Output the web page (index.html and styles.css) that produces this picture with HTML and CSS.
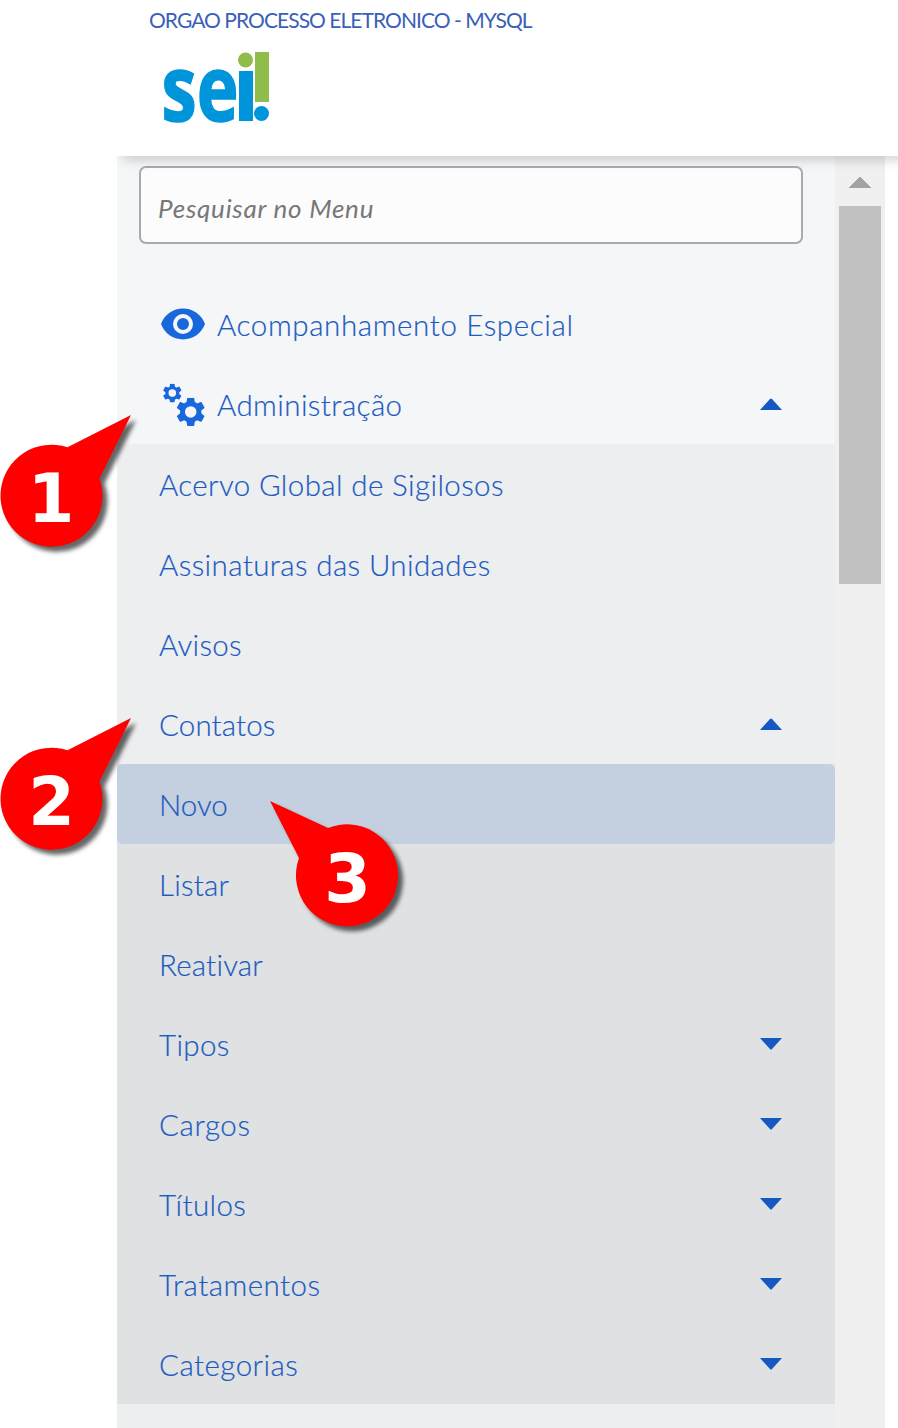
FILE: index.html
```html
<!DOCTYPE html>
<html lang="pt-BR">
<head>
<meta charset="utf-8">
<title>SEI - Menu</title>
<link rel="stylesheet" href="styles.css">
</head>
<body>
<svg class="defs" width="0" height="0" aria-hidden="true">
  <symbol id="gear" viewBox="2.4 2.4 19.2 19.2"><path d="M19.14 12.94c.04-.3.06-.61.06-.94 0-.32-.02-.64-.07-.94l2.03-1.58c.18-.14.23-.41.12-.61l-1.92-3.32c-.12-.22-.37-.29-.59-.22l-2.39.96c-.5-.38-1.03-.7-1.62-.94l-.36-2.54c-.04-.24-.24-.41-.48-.41h-3.84c-.24 0-.43.17-.47.41l-.36 2.54c-.59.24-1.13.57-1.62.94l-2.39-.96c-.22-.08-.47 0-.59.22L2.74 8.87c-.12.21-.08.47.12.61l2.03 1.58c-.05.3-.09.63-.09.94s.02.64.07.94l-2.03 1.58c-.18.14-.23.41-.12.61l1.92 3.32c.12.22.37.29.59.22l2.39-.96c.5.38 1.03.7 1.62.94l.36 2.54c.05.24.24.41.48.41h3.84c.24 0 .44-.17.47-.41l.36-2.54c.59-.24 1.13-.56 1.62-.94l2.39.96c.22.08.47 0 .59-.22l1.92-3.32c.12-.22.07-.47-.12-.61l-2.01-1.58zM12 15.9A3.9 3.9 0 1 1 12 8.1a3.9 3.9 0 0 1 0 7.8z"/></symbol>
  <symbol id="caret" viewBox="0 0 22 12"><path d="M0 0h22L12 11q-1 1-2 0z"/></symbol>
</svg>
<header class="top">
  <div class="org"><span>ORGAO PROCESSO ELETRONICO - MYSQL</span></div>
  <svg class="logo" width="108" height="76" viewBox="162 50 108 76" role="img" aria-label="sei!">
    <text class="logo-text" x="161.500" y="121" textLength="77" lengthAdjust="spacingAndGlyphs">se</text>
    <path class="blue" d="M239 71h14v50h-14z"/><circle class="blue" cx="261.5" cy="113.5" r="7.5"/>
    <path class="green" d="M255 52h14v50h-14z"/><circle class="green" cx="245.5" cy="60" r="7.5"/>
  </svg>
</header>
<main class="body">
  <div class="shade"></div>
  <nav class="side">
    <div class="search"><span class="t-search">Pesquisar no Menu</span></div>
    <a class="row"><svg class="ico" width="48" height="48" viewBox="0 0 24 24"><path fill-rule="evenodd" d="M12 4.3C7 4.3 2.73 7.4 1 12c1.73 4.6 6 7.7 11 7.7s9.27-3.1 11-7.7c-1.73-4.6-6-7.7-11-7.7zM12 17a5 5 0 1 1 0-10 5 5 0 0 1 0 10zm0-8a3 3 0 1 0 0 6 3 3 0 0 0 0-6z"/></svg><span class="t-acomp">Acompanhamento Especial</span></a>
    <a class="row"><svg class="ico" width="48" height="48" viewBox="159 380 48 48"><use href="#gear" x="163" y="383.8" width="18.6" height="18.6"/><use href="#gear" x="176.5" y="397.7" width="28.4" height="28.4"/></svg><span class="t-admin">Administração</span><svg class="caret up" width="22" height="12"><use href="#caret"/></svg></a>
    <div class="level2">
      <a class="row"><span class="t-acervo">Acervo Global de Sigilosos</span></a>
      <a class="row"><span class="t-assin">Assinaturas das Unidades</span></a>
      <a class="row"><span class="t-avisos">Avisos</span></a>
      <a class="row"><span class="t-contatos">Contatos</span><svg class="caret up" width="22" height="12"><use href="#caret"/></svg></a>
      <div class="level3">
        <a class="row active"><span class="t-novo">Novo</span></a>
        <a class="row"><span class="t-listar">Listar</span></a>
        <a class="row"><span class="t-reativar">Reativar</span></a>
        <a class="row"><span class="t-tipos">Tipos</span><svg class="caret" width="22" height="12"><use href="#caret"/></svg></a>
        <a class="row"><span class="t-cargos">Cargos</span><svg class="caret" width="22" height="12"><use href="#caret"/></svg></a>
        <a class="row"><span class="t-titulos">Títulos</span><svg class="caret" width="22" height="12"><use href="#caret"/></svg></a>
        <a class="row"><span class="t-trat">Tratamentos</span><svg class="caret" width="22" height="12"><use href="#caret"/></svg></a>
        <a class="row"><span class="t-categ">Categorias</span><svg class="caret" width="22" height="12"><use href="#caret"/></svg></a>
      </div>
    </div>
  </nav>
  <div class="scroll">
    <svg width="22" height="12" viewBox="0 0 22 12" shape-rendering="crispEdges"><path d="M11 0l11 12H0z" fill="#a3a3a3"/></svg>
    <div class="thumb"></div>
  </div>
</main>
<svg class="callout c1" width="150" height="150" viewBox="0 410 150 150"><path d="M131 415L67.500 447.300A51 51 0 1 0 99.500 478.500z"/><text x="51" y="522">1</text></svg>
<svg class="callout c2" width="150" height="150" viewBox="0 410 150 150"><path d="M131 415L67.500 447.300A51 51 0 1 0 99.500 478.500z"/><text x="51.500" y="521.500">2</text></svg>
<svg class="callout c3" width="150" height="150" viewBox="260 790 150 150"><path d="M270 801L328 828A51 51 0 1 1 299 858z"/><text x="347.500" y="902">3</text></svg>
</body>
</html>
```
FILE: styles.css
```css
* { box-sizing: border-box; }
body { margin: 0; width: 898px; height: 1428px; overflow: hidden; position: relative; background: #fff; font-family: Lato, sans-serif; color: #1c5bc0; display: flex; flex-direction: column; }
.defs { position: absolute; }
.top { height: 156px; flex: none; padding: 8px 0 0 149px; display: flex; flex-direction: column; }
.org { height: 24px; line-height: 24px; font-size: 21px; letter-spacing: -.95px; color: #3a60b8; white-space: nowrap; }
.logo { margin: 18px 0 0 13px; overflow: visible; }
.logo-text { font: 700 91px "Open Sans", sans-serif; fill: #0095da; stroke: #0095da; stroke-width: 1.5px; }
.blue { fill: #0095da; }
.green { fill: #8fbc4a; }
.body { position: relative; flex: 1; display: flex; padding-left: 117px; overflow: hidden; }
.shade { position: absolute; left: 123px; right: -20px; top: -10px; height: 10px; box-shadow: 0 3px 12px rgba(0,0,0,.22); }
.side { width: 718px; background: #f4f6f8; padding-top: 10px; display: flex; flex-direction: column; }
.search { margin: 0 32px 42px 22px; height: 78px; flex: none; border: 2px solid #a7abb0; border-radius: 7px; background: #fcfcfc; padding-left: 17px; display: flex; align-items: center; padding-top: 6px; font: italic 400 26px Lato, sans-serif; color: #777; }
.row { height: 80px; flex: none; padding: 0 53px 0 42px; display: flex; align-items: center; font-size: 29.500px; font-weight: 300; line-height: 40px; white-space: nowrap; }
.row span { padding-top: 1px; -webkit-text-stroke: .2px #1c5bc0; }
.ico { fill: #1967dc; margin-right: 10px; }
.search + .row { height: 78px; }
.search + .row .ico { margin-top: -3px; }
.row .t-acomp { padding: 0 0 1px; }
.t-search { letter-spacing: .75px; }
.t-acomp { letter-spacing: .63px; }
.t-admin { letter-spacing: .42px; }
.t-acervo, .t-assin { letter-spacing: .39px; }
.t-avisos { letter-spacing: .3px; }
.t-contatos { letter-spacing: .13px; }
.t-listar, .t-reativar { letter-spacing: .2px; }
.t-tipos { letter-spacing: .35px; }
.t-cargos { letter-spacing: .6px; }
.t-titulos { letter-spacing: .4px; }
.t-trat, .t-categ { letter-spacing: .46px; }
.caret { margin-left: auto; fill: #1558c4; }
.up { transform: rotate(180deg); }
.level2 { background: #edeef0; height: 984px; flex: none; }
.level3 { background: #dfe1e3; }
.active { background: #c4cfe0; border-radius: 6px; }
.scroll { width: 50px; background: #f0f0f0; padding-top: 20px; display: flex; flex-direction: column; align-items: center; gap: 18px; }
.thumb { width: 42px; height: 378px; background: #c1c1c1; }
.callout { position: absolute; fill: red; filter: drop-shadow(5px 5px 2px rgba(0,0,0,.6)); }
.callout text { fill: #fff; font: 700 67px "DejaVu Sans", sans-serif; text-anchor: middle; }
.c1 { left: -.5px; top: 410px; }
.c2 { left: -.5px; top: 713px; }
.c3 { left: 260px; top: 790px; }
```
